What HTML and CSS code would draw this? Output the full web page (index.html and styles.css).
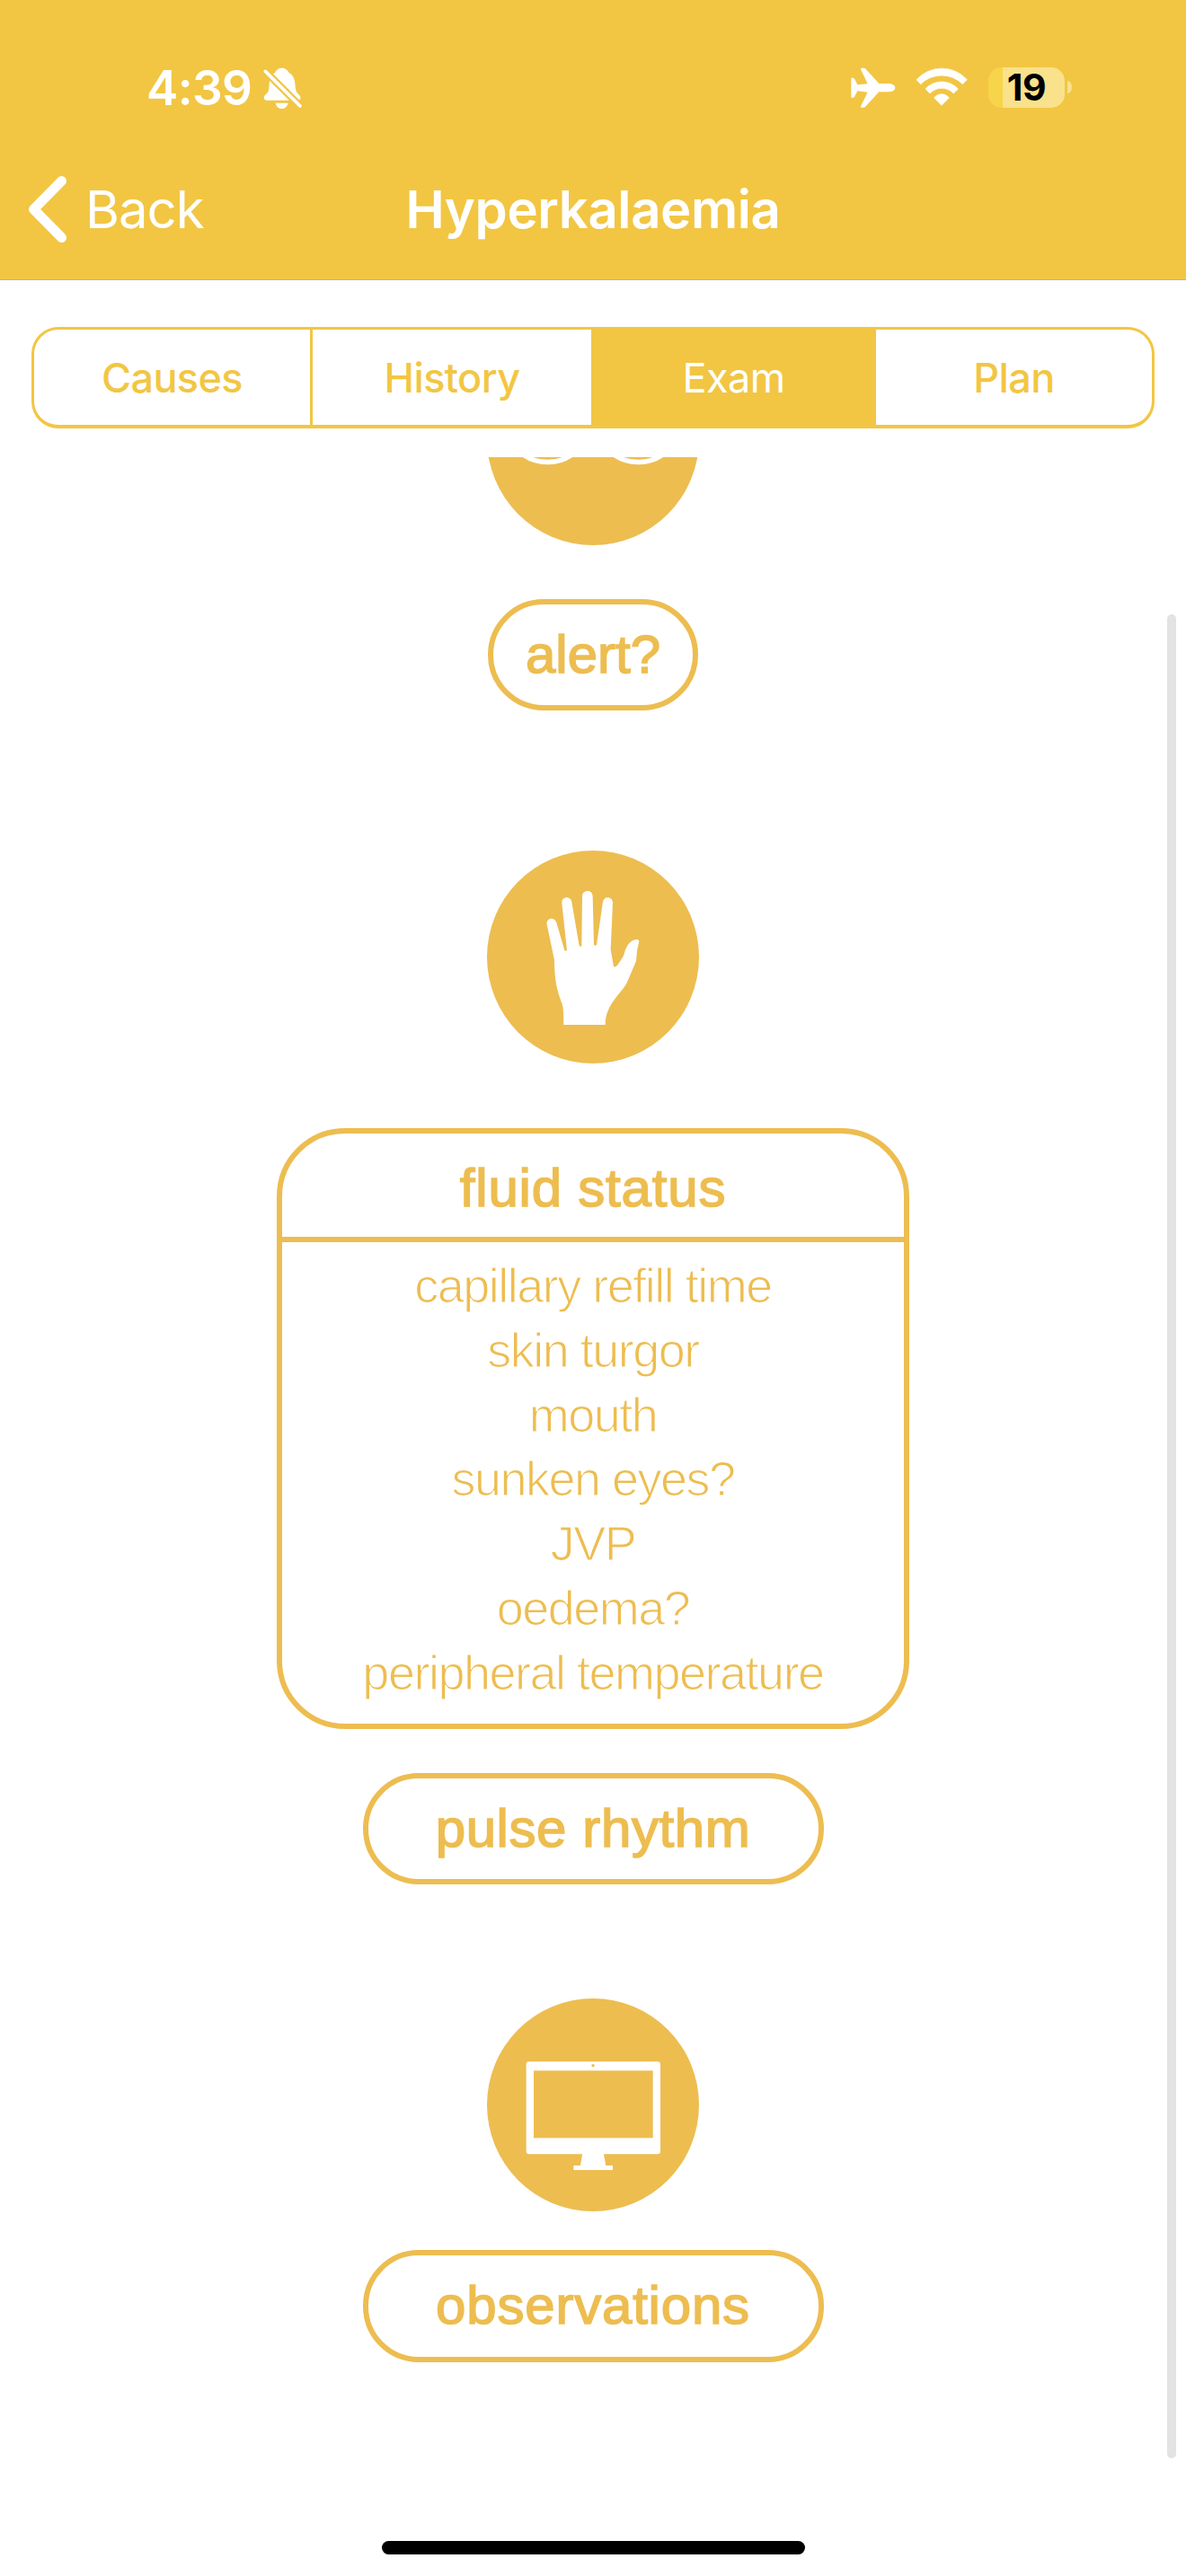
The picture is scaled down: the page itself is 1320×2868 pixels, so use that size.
FILE: index.html
```html
<!DOCTYPE html>
<html lang="en">
<head>
<meta charset="utf-8">
<title>Hyperkalaemia</title>
<link rel="stylesheet" href="styles.css">
</head>
<body>
<div class="screen">
  <header class="header">
    <div class="status">
      <span class="time">4:39</span>
      <svg class="bell" viewBox="880 104 130 140">
        <mask id="cut"><rect x="870" y="94" width="150" height="160" fill="#fff"/><path d="M870 100L1020 250" stroke="#000" stroke-width="25"/></mask>
        <path mask="url(#cut)" d="M942 106C953 106 961 112 966 122C981 130 986 146 987 165C988 184 992 189 1000 196Q1006 202 1004 210Q1002 214 996 214H890Q882 213 882 204C884 195 898 192 899 174C901 150 900 131 919 122C924 112 931 106 942 106Z"/>
        <path d="M921 223H963C960 236 951 242 942 242C932 242 924 236 921 223Z"/>
        <path d="M887 117L1003 233" stroke="#fff" stroke-width="11" stroke-linecap="round"/>
      </svg>
      <svg class="plane" viewBox="200 106 150 136"><path d="M201 141H207Q210 141 212 144L222 164L256 161L233 113Q231 108 236 108H243Q247 108 250 112L294 160H322C338 160 348 166 348 174C348 183 338 188 322 188H294L250 236Q247 240 243 240H236Q231 240 233 236L256 189L222 185L212 204Q210 207 207 207H201Z"/></svg>
      <svg class="wifi" viewBox="418 103 176 130"><g stroke="#fff" stroke-width="2" stroke-linejoin="round"><path d="M421 144A114 114 0 0 1 590 144L575 159A99 99 0 0 0 435 159Z"/><path d="M451 175A74 74 0 0 1 560 175L545 190A54 54 0 0 0 466 190Z"/><path d="M480 205A31 31 0 0 1 530 205L505 230Z"/></g></svg>
      <div class="battery"><span class="level">19</span></div>
      <span class="nub"></span>
    </div>
    <nav class="nav">
      <a class="back">
        <svg class="chevron" viewBox="0 0 46 76"><path d="M38.500 6.500L7.500 38L38.500 69.500" /></svg>
        <span class="back-label">Back</span>
      </a>
      <h1 class="title">Hyperkalaemia</h1>
    </nav>
  </header>

  <div class="tabs">
    <span class="tab">Causes</span>
    <span class="tab">History</span>
    <span class="tab active">Exam</span>
    <span class="tab">Plan</span>
  </div>

  <main class="content">
    <svg class="disc disc-eyes" viewBox="0 0 236 237">
      <ellipse class="gold" cx="118" cy="118.5" rx="118" ry="118.5"/>
      <g fill="none" stroke="#fff" stroke-width="5.3"><ellipse cx="67.5" cy="107.5" rx="43" ry="37"/><ellipse cx="168.5" cy="107.5" rx="43" ry="37"/></g>
    </svg>
    <div class="pill pill-alert">alert?</div>

    <svg class="disc disc-hand" viewBox="65 51 708 711">
      <ellipse class="gold" cx="419" cy="406.500" rx="354" ry="355.500"/>
      <path fill="#fff" d="M321 633C321 600 321 578 315 560C300 520 291 490 290 416L265 298C263 284 272 278 281 278C290 278 295 285 297 292L324 384Q328 389 332 384L315 226C315 214 322 208 331 208C341 208 347 215 348 223L373 369Q377 373 381 370L383 204C383 192 391 186 401 186C411 186 418 193 418 204L422 366Q427 370 431 366L452 222C454 213 460 208 468 208C478 208 485 215 485 226L478 382L488 438Q492 442 500 434C510 420 521 405 523 396C530 368 545 347 567 348C575 350 573 357 570 368C564 388 566 400 563 420L535 486C520 525 460 560 460 633Z"/>
    </svg>

    <section class="card">
      <h2 class="card-title">fluid status</h2>
      <ul class="list">
        <li>capillary refill time</li>
        <li>skin turgor</li>
        <li>mouth</li>
        <li>sunken eyes?</li>
        <li>JVP</li>
        <li>oedema?</li>
        <li>peripheral temperature</li>
      </ul>
    </section>

    <div class="pill pill-pulse">pulse rhythm</div>

    <svg class="disc disc-monitor" viewBox="65 45 708 711">
      <ellipse class="gold" cx="419" cy="400.500" rx="354" ry="355.500"/>
      <g fill="#fff"><rect x="196" y="256" width="448" height="309" rx="9"/><path d="M384 560H454L462 603H485V618H354V603H377Z"/></g>
      <rect class="gold" x="221" y="286" width="398" height="225"/>
      <circle class="gold" cx="419" cy="269" r="5"/>
    </svg>
    <div class="pill pill-obs">observations</div>
  </main>

  <div class="scrollbar"></div>
  <div class="home-bar"></div>
</div>
</body>
</html>
```
FILE: styles.css
```css
* { box-sizing: border-box; }

body { margin: 0; background: #fff; }

.screen {
  position: relative;
  width: 1320px;
  height: 2868px;
  overflow: hidden;
  display: flex;
  flex-direction: column;
  background: #fff;
  font-family: Inter, "Liberation Sans", sans-serif;
}

svg { display: block; flex: none; }

.header {
  height: 312px;
  flex: none;
  background: #f2c643;
  border-bottom: 1px solid #b2b2ac;
  color: #fff;
}

.status {
  height: 194px;
  padding: 0 127px 0 163px;
  display: flex;
  align-items: center;
}
.status svg { fill: #fff; }
.time { font-size: 53px; font-weight: 600; line-height: 60px; width: 130px; letter-spacing: -0.6px; padding-top: 2px; white-space: nowrap; }
.bell { width: 43.3px; height: 46.7px; margin-top: 2px; }
.plane { width: 50px; height: 45.3px; margin-left: auto; margin-top: 2px; }
.wifi { width: 58.7px; height: 43.3px; margin-left: 22.3px; }
.battery {
  width: 85px;
  height: 45px;
  margin-left: 22px;
  border-radius: 15px;
  background: linear-gradient(90deg, #f7d54a 16px, #f9e28b 16px);
  display: flex;
  justify-content: center;
  align-items: center;
}
.level { color: #000; font-size: 41px; font-weight: 700; line-height: 45px; letter-spacing: -0.5px; }
.nub { width: 5px; height: 14px; margin-left: 3px; border-radius: 0 5px 5px 0 / 0 7px 7px 0; background: #f9e28b; }

.nav {
  height: 78px;
  display: grid;
  grid-template-columns: 1fr auto 1fr;
  align-items: center;
  line-height: 78px;
}
.back { display: flex; align-items: center; padding-left: 30px; }
.chevron { width: 46px; height: 76px; fill: none; stroke: #fff; stroke-width: 11; stroke-linecap: round; stroke-linejoin: round; }
.back-label { margin-left: 19px; font-size: 58px; font-weight: 400; letter-spacing: -1px; }
.title { margin: 0; font-size: 58px; font-weight: 600; letter-spacing: -0.4px; }

.tabs {
  height: 113px;
  flex: none;
  margin: 52px 35px 32px;
  display: grid;
  grid-template-columns: 310px 313px 314px 1fr;
  border: 3px solid #f2c643;
  border-bottom-width: 4px;
  border-radius: 30px;
  overflow: hidden;
}
.tab {
  display: flex;
  align-items: center;
  justify-content: center;
  color: #f2c643;
  font-size: 45px;
  font-weight: 500;
  letter-spacing: -0.6px;
  border-right: 3px solid #f2c643;
}
.tab:last-child { border-right: 0; }
.tab.active { background: #f2c643; color: #fff; font-weight: 400; }

.content {
  flex: 1;
  min-height: 0;
  overflow: hidden;
  display: flex;
  flex-direction: column;
  align-items: center;
  font-family: "Liberation Sans", Arial, sans-serif;
  color: #edbd50;
}

.gold { fill: #edbd50; }
.disc { width: 236px; height: 237px; }
.disc-eyes { margin-top: -139px; }
.disc-hand { margin-top: 156px; }
.disc-monitor { margin-top: 127px; }

.pill {
  flex: none;
  width: 513px;
  height: 124px;
  border: 6px solid #edbd50;
  border-radius: 62px;
  font-size: 60px;
  line-height: 112px;
  text-align: center;
  -webkit-text-stroke: 1.6px #edbd50;
}
.pill-alert { width: 234px; margin-top: 60px; }
.pill-pulse { margin-top: 49px; letter-spacing: 0.6px; }
.pill-obs { margin-top: 43px; height: 125px; letter-spacing: 0.8px; }

.card {
  flex: none;
  width: 704px;
  height: 669px;
  margin-top: 72px;
  border: 6px solid #edbd50;
  border-radius: 76px;
}
.card-title {
  margin: 0;
  height: 121px;
  padding-top: 3px;
  border-bottom: 6px solid #edbd50;
  font-size: 60px;
  font-weight: 400;
  line-height: 115px;
  letter-spacing: 0.8px;
  text-align: center;
  -webkit-text-stroke: 1.6px #edbd50;
}
.list {
  list-style: none;
  margin: 0;
  padding: 13px 0 0;
  font-size: 54px;
  line-height: 71.8px;
  letter-spacing: -1.5px;
  text-align: center;
  /* a background-coloured outline trims the regular face to a light weight */
  -webkit-text-stroke: 1.2px #fff;
}

.scrollbar {
  position: absolute;
  left: 1299px;
  top: 684px;
  width: 10px;
  height: 2053px;
  border-radius: 5px;
  background: #e3e3e3;
}
.home-bar {
  position: absolute;
  left: 425px;
  top: 2829px;
  width: 471px;
  height: 15px;
  border-radius: 8px;
  background: #000;
}
```
